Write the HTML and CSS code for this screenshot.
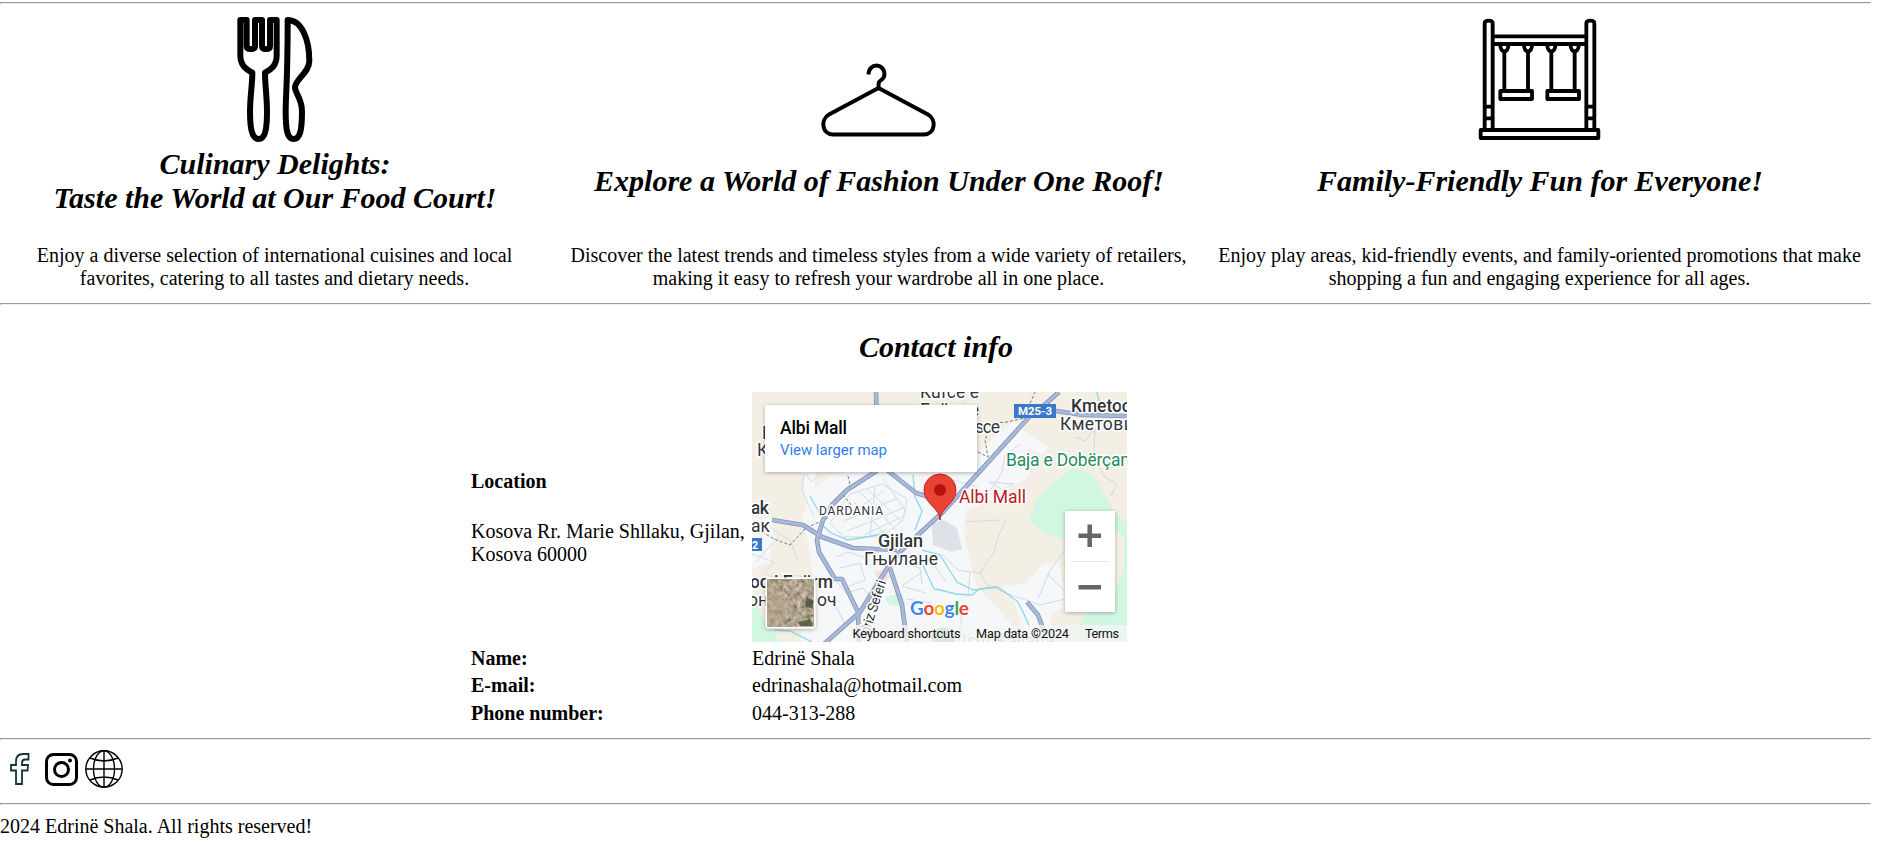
FILE: index.html
```html
<!DOCTYPE html>
<html lang="en">
<head>
<meta charset="utf-8">
<title>Albi Mall</title>
<link rel="stylesheet" href="styles.css">
</head>
<body>
<hr class="rule rule-first">
<section class="features">
  <div class="icon">
    <svg width="80" height="133" viewBox="44 39 240 399" fill="none" stroke="#000" stroke-width="18" stroke-linejoin="round">
      <path d="M60 60H79V138Q79 147 91.500 147T104 138V60H125V138Q125 147 137 147T149 138V60H169V165C169 195 156 206 134 218C134 255 140 290 140 335C140 395 132 417 115 417S89 395 89 335C89 290 96 255 96 218C74 206 60 195 60 165Z"/>
      <path d="M202 60C244 60 267 118 267 183C267 218 224 238 224 262C224 280 245 295 245 335C245 395 238 417 220 417S196 395 196 335C196 280 202 250 202 60Z"/>
    </svg>
  </div>
  <div class="icon">
    <svg width="120" height="133" viewBox="819 12.5 120 133" fill="none" stroke="#000" stroke-width="4">
      <path d="M868.6 74C868.6 62 884.4 62 884.4 74C884.4 80 878.6 79 878.6 83V88"/>
      <path d="M878.5 87.5L829 114C820 119 822 134 833 134H924C935 134 937 119 928 114Z" stroke-linejoin="round"/>
    </svg>
  </div>
  <div class="icon">
    <svg width="124" height="133" viewBox="24 39 372 399" fill="none" stroke="#000" stroke-width="11.500" stroke-linejoin="round">
      <rect x="32" y="390" width="353" height="24"/>
      <path d="M44 388V70Q44 62 56 62T68 70V388M44 320H68M44 355H68"/>
      <path d="M349 388V70Q349 62 361 62T373 70V388M349 320H373M349 355H373"/>
      <path d="M68 109H349M68 132H349"/>
      <path d="M91 136C91 160 115 160 115 136M162 136C162 160 186 160 186 136M232 136C232 160 256 160 256 136M302 136C302 160 326 160 326 136"/>
      <path d="M103 155V270M174 155V270M244 155V270M314 155V270"/>
      <rect x="91" y="273" width="95" height="24"/>
      <rect x="232" y="273" width="95" height="24"/>
    </svg>
  </div>
  <h2 class="title">Culinary Delights:<br>Taste the World at Our Food Court!</h2>
  <h2 class="title">Explore a World of Fashion Under One Roof!</h2>
  <h2 class="title">Family-Friendly Fun for Everyone!</h2>
  <p class="text">Enjoy a diverse selection of international cuisines and local<br>favorites, catering to all tastes and dietary needs.</p>
  <p class="text">Discover the latest trends and timeless styles from a wide variety of retailers,<br>making it easy to refresh your wardrobe all in one place.</p>
  <p class="text">Enjoy play areas, kid-friendly events, and family-oriented promotions that make<br>shopping a fun and engaging experience for all ages.</p>
</section>
<hr class="rule">
<section class="contact">
  <h2 class="title contact-title">Contact info</h2>
  <div class="details">
    <div class="address">
      <b>Location</b>
      <p class="street">Kosova Rr. Marie Shllaku, Gjilan,<br>Kosova 60000</p>
    </div>
    <svg class="map" width="375" height="250" viewBox="0 0 375 250">
      <defs>
        <filter id="aerial" x="0" y="0" width="1" height="1">
          <feTurbulence type="fractalNoise" baseFrequency=".22" numOctaves="4" seed="8"/>
          <feColorMatrix values=".7 .2 0 0 -.02  .6 .25 0 0 -.06  .5 .2 0 0 -.08  0 0 0 0 1"/>
        </filter>
        <filter id="shadow" x="-20%" y="-20%" width="140%" height="150%">
          <feDropShadow dx="0" dy="1" stdDeviation="2" flood-opacity=".3"/>
        </filter>
      </defs>
      <rect width="375" height="250" fill="#f3efe5"/>
      <g fill="#f6f7f9">
        <path d="M58 100L78 84L120 72L185 75L226 60L262 28L275 45L278 84L240 108L214 118L212 142L220 178L224 192L216 250H48L62 190L56 150L50 128Z"/>
        <path d="M262 37L270 38L297 55L290 63L270 53Z"/>
        <path d="M250 194L273 192L290 173L306 170L313 195V215L300 222L296 250H276L262 210Z"/>
        <path d="M0 125L22 128L18 170L0 178ZM222 190L262 235L250 250H216Z"/>
        <path d="M50 80L64 75L62 105L54 112Z"/>
      </g>
      <g fill="#d1f6e1">
        <path d="M278 128L284 108L303 90L321 76L341 82L352 102L362 120L375 130V250H316L340 215L360 210L372 175V145L363 138L340 155L313 148L291 140Z"/>
        <path d="M0 208L12 226L28 250H0Z"/>
        <path d="M133 205L150 201L154 215L137 213Z"/>
        <path d="M127 139L134 137V144H127Z"/>
      </g>
      <path d="M122 180L134 177L138 185L129 193Z" fill="#fadfdc"/>
      <path d="M180 133L190 127L205 136L210 157L200 160L181 153Z" fill="#dfe1e8"/>
      <g class="street-lines">
        <path d="M98 102L130 92L155 107L151 128L130 145H92L78 131ZM108 100L144 138M102 110L136 145M115 97L150 130M98 121L132 99M92 129L146 106M95 139L151 116M112 143L154 123M131 87L155 121M123 95L118 145"/>
        <path d="M52 82L50 98L56 112L62 124M66 84L59 90L54 82M18 135L38 149L46 168M0 162L22 170L12 182M4 170L20 152"/>
        <path d="M84 165L96 160L112 165L127 160M88 176L108 171L113 188L97 194M76 179L94 201L111 196L121 207M119 208L134 198M160 163L179 169L194 190M170 180L150 194L173 201M155 207L180 211"/>
        <path d="M190 162L206 178L228 181L242 160L246 145L255 127M228 180L234 192L254 201L288 213L314 207M313 158L297 180L286 207M296 183L313 199M218 180L216 205M242 94L250 80L253 63L268 52M237 90L262 92L251 98ZM223 112L242 94M343 36L342 60L351 84L365 92L359 104M322 45L334 49L340 38"/>
        <path d="M202 0L217 16M213 130L248 128M210 220L207 250M197 87L226 95M145 170L168 176L170 192M52 200L62 208M82 211L94 234"/>
      </g>
      <g class="water">
        <path d="M170 158L188 163L205 190L221 198L245 195L257 203L266 210L278 235"/>
        <path d="M167 165L182 197L188 198L204 202L220 203L227 197L245 195"/>
        <path d="M69 132L79 141L96 148L114 145L130 142"/>
        <path d="M58 104L67 120M161 83L163 105L170 119L163 138M22 238L38 239L60 250M345 0L347 9"/>
      </g>
      <g class="trail">
        <path d="M10 140L22 147L38 153L54 136L76 126M96 84L98 93L92 104L100 114M226 60L236 65L233 48L240 31L255 30L277 25M276 16L283 0"/>
      </g>
      <g class="road-edge">
        <path d="M124 -2L126 78L95 98L80 113L71 128L65 148L67 160L83 187H90L106 220L107 252"/>
        <path d="M375 24L331 23L304 19L278 24L191 120L168 141L148 160L136 175L108 220L72 252"/>
        <path d="M307 0L290 15M135 78L164 101L174 104L188 106M20 128L51 133L70 145L101 156L145 158M138 176L150 213L155 250M275 210L286 223L296 250"/>
      </g>
      <g class="road-fill">
        <path d="M124 -2L126 78L95 98L80 113L71 128L65 148L67 160L83 187H90L106 220L107 252"/>
        <path d="M375 24L331 23L304 19L278 24L191 120L168 141L148 160L136 175L108 220L72 252"/>
        <path d="M307 0L290 15M135 78L164 101L174 104L188 106M20 128L51 133L70 145L101 156L145 158M138 176L150 213L155 250M275 210L286 223L296 250"/>
      </g>
      <path d="M180 252A12 12 0 1 1 202 252Z" fill="#7dbb9f"/>
      <g class="label">
        <text x="168" y="6" font-size="17.5" textLength="59">Kufce e</text>
        <text x="168" y="24" font-size="17.5" textLength="59">Epërme</text>
        <text x="223" y="41" font-size="17.5" textLength="25">sce</text>
        <text x="319" y="20" font-size="17.5" class="medium" textLength="60">Kmetoc</text>
        <text x="308" y="38" font-size="17.5" textLength="74">Кметовц</text>
        <text x="10" y="47" font-size="17.5">K</text>
        <text x="5" y="64" font-size="17.5">К</text>
        <text x="-1" y="122" font-size="17.5" class="medium" textLength="18">ak</text>
        <text x="-1" y="140" font-size="17.5" textLength="19">ак</text>
        <text x="67" y="123" font-size="12" textLength="64">DARDANIA</text>
        <text x="126" y="155" font-size="18" class="medium" textLength="45">Gjilan</text>
        <text x="112" y="173" font-size="17.5" textLength="74">Гњилане</text>
        <text x="-2" y="196" font-size="17.5" class="medium" textLength="83">oq i Epërm</text>
        <text x="-4" y="214" font-size="17.5">оњи</text>
        <text x="65" y="214" font-size="17.5">оч</text>
        <text transform="translate(117 243) rotate(-72)" font-size="14" textLength="56">driz Seferi</text>
        <text x="254" y="74" font-size="17.5" fill="#1f8a60" textLength="124">Baja e Dobërçan</text>
        <text x="207" y="111" font-size="17.5" fill="#b3201f" textLength="67">Albi Mall</text>
        <text x="210" y="255" font-size="17.5" fill="#7bb39c" textLength="92">Isuf Kallaba</text>
      </g>
      <rect x="262" y="12" width="42" height="14" fill="#3c78c8"/>
      <text x="266" y="23" font-size="11.500" fill="#fff" class="bold" textLength="34">M25-3</text>
      <rect x="-3" y="146" width="13" height="13" fill="#3c78c8"/>
      <text x="0" y="156.500" font-size="10.500" fill="#fff" class="bold">2</text>
      <path d="M188 128C188 116 172 112 172 98A16 16 0 0 1 204 98C204 112 188 116 188 128Z" fill="#ea4335" stroke="#c5221f"/>
      <circle cx="188" cy="98" r="6" fill="#b31412"/>
      <rect x="98" y="233" width="277" height="17" fill="#f5f5f5" opacity=".8"/>
      <g font-size="12.700" fill="#111">
        <text x="100.500" y="246" textLength="108">Keyboard shortcuts</text>
        <text x="224" y="246" textLength="93">Map data ©2024</text>
        <text x="333" y="246" textLength="34">Terms</text>
      </g>
      <text class="brand" x="158" y="223" font-size="19" textLength="59"><tspan fill="#4285f4">G</tspan><tspan fill="#ea4335">o</tspan><tspan fill="#fbbc05">o</tspan><tspan fill="#4285f4">g</tspan><tspan fill="#34a853">l</tspan><tspan fill="#ea4335">e</tspan></text>
      <rect x="13" y="13" width="212" height="67" rx="2" fill="#fff" filter="url(#shadow)"/>
      <text x="28" y="42" font-size="17.500" class="medium" fill="#000" textLength="67">Albi Mall</text>
      <text x="28" y="63" font-size="15" fill="#2f7fe8" textLength="107">View larger map</text>
      <rect x="13.500" y="185.500" width="50" height="51" rx="3" fill="#fff" filter="url(#shadow)"/>
      <rect x="15" y="187" width="47" height="48" filter="url(#aerial)"/>
      <path d="M17 190L28 211L34 230M28 214L43 202L60 187M32 211L48 223M30 190L33 207" fill="none" stroke="#b7a88c" stroke-width="1.300" opacity=".75"/>
      <path d="M15 190L26 200L33 216V235H15Z" fill="#b5a68c" opacity=".4"/>
      <path d="M54 205L61 208V217L53 214ZM46 230L58 227L61 234H48Z" fill="#39452f" opacity=".7"/>
      <rect x="313" y="119" width="50" height="101" fill="#fff" filter="url(#shadow)"/>
      <path d="M326.500 143.700H349M337.700 132.500V155M326.500 195.300H349" stroke="#666" stroke-width="4.500"/>
      <path d="M319 169.500H356" stroke="#e6e6e6"/>
    </svg>
    <b>Name:</b><span>Edrinë Shala</span>
    <b>E-mail:</b><span>edrinashala@hotmail.com</span>
    <b>Phone number:</b><span>044-313-288</span>
  </div>
</section>
<hr class="rule">
<nav class="social">
  <svg width="20" height="32" viewBox="0 0 20 32" fill="none" stroke="#12343b" stroke-width="1.800">
    <path d="M6 31V17.500H1V12H6V8.500C6 3 9 1 13 1H18.500V6.500H15C12.500 6.500 12 8 12 10V12H18L17.500 17.500H12V31Z"/>
  </svg>
  <svg width="33" height="33" viewBox="0 0 33 33" fill="none" stroke="#000">
    <rect x="1.500" y="1.500" width="30" height="30" rx="7" stroke-width="3"/>
    <circle cx="16.500" cy="16.500" r="7" stroke-width="3"/>
    <circle cx="25" cy="7.500" r="2" fill="#000" stroke="none"/>
  </svg>
  <svg class="globe" width="38" height="38" viewBox="0 0 38 38" fill="none" stroke="#000" stroke-width="1.400">
    <circle cx="19" cy="19" r="18.200"/>
    <ellipse cx="19" cy="19" rx="10.500" ry="18.200"/>
    <path d="M19 1V37M1 19H37M5 8Q19 14 33 8M5 30Q19 24 33 30"/>
  </svg>
</nav>
<hr class="rule">
<footer class="footer">2024 Edrinë Shala. All rights reserved!</footer>
</body>
</html>
```
FILE: styles.css
```css
body {
  margin: 0;
  width: 1871px;
  background: #fff;
  color: #000;
  font: 20px/23px "Liberation Serif", "Times New Roman", serif;
}

.rule {
  margin: 0;
  border: 1px solid;
  border-color: #9a9a9a #eee #eee #9a9a9a;
}

.rule-first {
  margin-top: 2px;
}

.features {
  display: grid;
  grid-template-columns: 549px 659px 663px;
  grid-template-rows: 143px 68px 46px;
  height: 299px;
  align-items: center;
  text-align: center;
}

.icon {
  align-self: end;
  height: 134px;
}

.icon svg {
  display: block;
  margin: 0 auto;
}

.title {
  margin: 0;
  padding-left: 1px;
  font-size: 30px;
  line-height: 34px;
  font-style: italic;
}

.text {
  margin: 29px 0 0;
  align-self: start;
}

.contact {
  height: 433px;
}

.contact-title {
  padding: 25px 0 28px 1px;
  text-align: center;
}

.details {
  display: grid;
  grid-template-columns: 281px 375px;
  grid-template-rows: 250px 23px 23px 23px;
  row-gap: 4.5px;
  margin-left: 471px;
}

.address {
  align-self: center;
  padding-top: 1px;
}

.street {
  margin: 27px 0 0;
}

.map {
  display: block;
  overflow: hidden;
  font-family: Roboto, sans-serif;
}

.label {
  fill: #30343a;
  stroke: #fff;
  stroke-width: 3px;
  stroke-linejoin: round;
  paint-order: stroke;
}

.medium {
  font-weight: 500;
}

.bold {
  font-weight: 700;
}

.brand {
  font-family: Lato, sans-serif;
  font-weight: 700;
  stroke: #fff;
  stroke-width: 2px;
  paint-order: stroke;
}

.street-lines {
  fill: none;
  stroke: #d2dae5;
  stroke-width: 1;
}

.water {
  fill: none;
  stroke: #8ed7e8;
  stroke-width: 1.3;
}

.trail {
  fill: none;
  stroke: #777;
  stroke-dasharray: 3 2;
}

.road-edge {
  fill: none;
  stroke: #8193bb;
  stroke-width: 4.6;
  stroke-linejoin: round;
}

.road-fill {
  fill: none;
  stroke: #a9b9d8;
  stroke-width: 3;
  stroke-linejoin: round;
}

.social {
  display: flex;
  align-items: center;
  height: 58px;
  padding: 0 0 5px 10px;
}

.social svg + svg {
  margin-left: 15px;
}

.social .globe:last-child {
  margin-left: 7px;
}

.footer {
  padding-top: 10px;
}
```
